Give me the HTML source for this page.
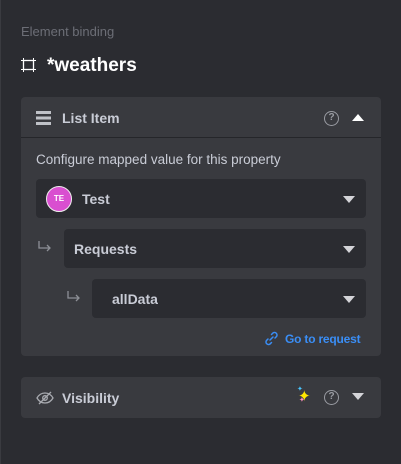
<!DOCTYPE html>
<html><head><style>
*{margin:0;padding:0;box-sizing:border-box}
body{width:401px;height:464px;background:#2b2c31;font-family:"Liberation Sans",sans-serif;position:relative;overflow:hidden}
.a{position:absolute}
.panel{background:#393a3f;border-radius:4px}
.sel{background:#2b2c31;border-radius:4px;position:absolute;height:39px}
.sel span{position:absolute;top:12px;font-size:14px;font-weight:bold;color:#c9ccd6}
.tri{position:absolute;right:11px;top:17px;width:0;height:0;border-left:6px solid transparent;border-right:6px solid transparent;border-top:7px solid #d4d4d8}
.q{position:absolute;width:15px;height:15px;border:1.5px solid #9a9ca3;border-radius:50%;color:#9a9ca3;font-size:10px;text-align:center;line-height:12px;font-weight:bold}
</style></head><body>
<div class="a" style="left:0;top:0;width:1px;height:464px;background:#3a3b40"></div>
<div class="a" style="left:21px;top:24px;font-size:13px;color:#6c6e76">Element binding</div>
<svg class="a" style="left:21px;top:58px" width="15" height="14" viewBox="0 0 15 14"><rect x="2.5" y="2.5" width="10" height="9" fill="none" stroke="#fff" stroke-width="1.3"/><path d="M0 2.5h15M0 11.5h15M2.5 0v14M12.5 0v14" stroke="#fff" stroke-width="1"/></svg>
<div class="a" style="left:47px;top:55px;font-size:19px;font-weight:bold;color:#fff">*weathers</div>

<div class="a panel" style="left:21px;top:97px;width:360px;height:259px"></div>
<div class="a" style="left:21px;top:137px;width:360px;height:1px;background:#25262a"></div>
<svg class="a" style="left:36px;top:110px" width="15" height="16"><rect y="1" width="15" height="3" fill="#bfc1c7"/><rect y="6.5" width="15" height="3" fill="#bfc1c7"/><rect y="12" width="15" height="3" fill="#bfc1c7"/></svg>
<div class="a" style="left:62px;top:110px;font-size:14px;font-weight:bold;color:#c9ccd6">List Item</div>
<div class="q" style="left:324px;top:111px">?</div>
<div class="a" style="left:352px;top:114px;width:0;height:0;border-left:6px solid transparent;border-right:6px solid transparent;border-bottom:7px solid #fff"></div>
<div class="a" style="left:36px;top:152px;font-size:13.5px;color:#c9ccd6">Configure mapped value for this property</div>

<div class="sel" style="left:36px;top:179px;width:330px"><div class="a" style="left:10px;top:7px;width:26px;height:26px;border-radius:50%;background:#d94fd0;border:1px solid #eee;color:#fff;font-size:8px;font-weight:bold;text-align:center;line-height:24px">TE</div><span style="left:46px">Test</span><div class="tri"></div></div>
<svg class="a" style="left:38px;top:241px" width="14" height="12" viewBox="0 0 14 12" fill="none" stroke="#8d8f96" stroke-width="1.3"><path d="M1 0v7h11M9 4l3 3-3 3"/></svg>
<div class="sel" style="left:64px;top:229px;width:302px"><span style="left:10px">Requests</span><div class="tri"></div></div>
<svg class="a" style="left:67px;top:291px" width="14" height="12" viewBox="0 0 14 12" fill="none" stroke="#8d8f96" stroke-width="1.3"><path d="M1 0v7h11M9 4l3 3-3 3"/></svg>
<div class="sel" style="left:92px;top:279px;width:274px"><span style="left:20px">allData</span><div class="tri"></div></div>
<svg class="a" style="left:264px;top:331px" width="15" height="15" viewBox="0 0 15 15" fill="none" stroke="#3a8ef6" stroke-width="1.5" stroke-linecap="round"><path d="M6 9 9 6M7.5 3.5l1.5-1.5a2.5 2.5 0 013.5 3.5L11 7M7.5 11.5 6 13a2.5 2.5 0 01-3.5-3.5L4 8"/></svg>
<div class="a" style="left:285px;top:332px;font-size:12px;font-weight:bold;color:#3a8ef6;letter-spacing:-0.2px">Go to request</div>

<div class="a panel" style="left:21px;top:377px;width:360px;height:41px"></div>
<svg class="a" style="left:36px;top:391px" width="18" height="14" viewBox="0 0 18 14" fill="none" stroke="#a8aab0" stroke-width="1.3"><path d="M1 7c2-3.5 5-5 8-5s6 1.5 8 5c-2 3.5-5 5-8 5s-6-1.5-8-5z"/><circle cx="9" cy="7" r="2.3"/><path d="M3 13 15 1"/></svg>
<div class="a" style="left:62px;top:390px;font-size:14px;font-weight:bold;color:#c9ccd6">Visibility</div>
<div class="a" style="left:298px;top:387px;font-size:15px;color:#ffe600">✦</div>
<div class="a" style="left:297px;top:385px;font-size:7px;color:#4ac6ff">✦</div>
<div class="a" style="left:299px;top:396px;font-size:7px;color:#ff8fc0">✦</div>
<div class="q" style="left:324px;top:390px">?</div>
<div class="tri" style="right:auto;left:352px;top:393px"></div>
</body></html>
